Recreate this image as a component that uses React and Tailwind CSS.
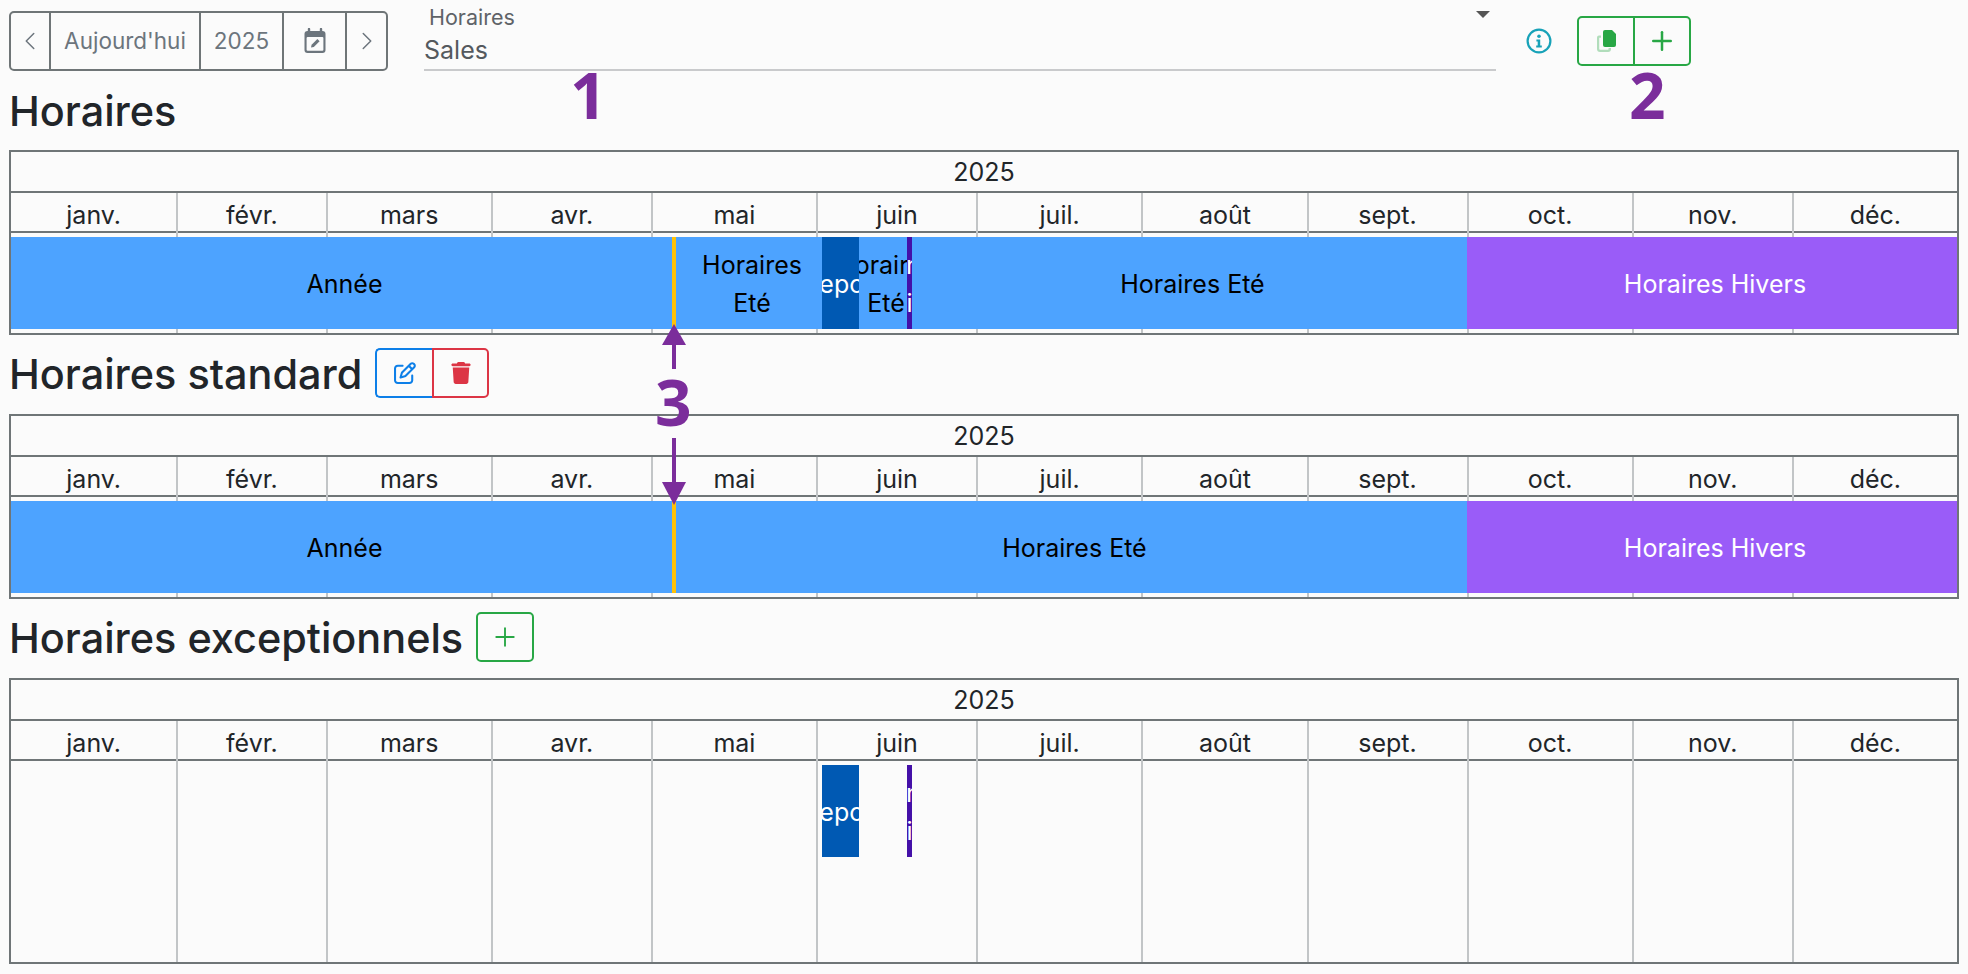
import React from 'react';
import { ChevronLeft, ChevronRight, Plus } from 'lucide-react';
import { FaTrash, FaRegPenToSquare } from 'react-icons/fa6';

const months = ['janv.', 'févr.', 'mars', 'avr.', 'mai', 'juin', 'juil.', 'août', 'sept.', 'oct.', 'nov.', 'déc.'];
const monthGrid = 'grid grid-cols-[31fr_28fr_31fr_30fr_31fr_30fr_31fr_31fr_30fr_31fr_30fr_31fr]';

const blue = 'bg-[#4da3ff] text-black';
const violet = 'bg-[#9a5cf8] text-white';
const navy = 'bg-[#0059b3] text-white';
const indigo = 'bg-[#4410a8] text-white';
const yellow = 'bg-[#ffc107]';

const summaryBars = [
  { w: 'w-[661px]', color: blue, lines: ['Année'] },
  { w: 'w-[4px]', color: yellow, lines: [] },
  { w: 'w-[146px]', color: blue, lines: ['Horaires', 'Eté'] },
  { w: 'w-[37px]', color: navy, lines: ['Repos'], tight: true },
  { w: 'w-[48px]', color: blue, lines: ['Horaires', 'Eté'] },
  { w: 'w-[5px]', color: indigo, lines: ['Lundi', 'Fin'], tight: true },
  { w: 'w-[555px]', color: blue, lines: ['Horaires Eté'] },
  { w: 'flex-1', color: violet, lines: ['Horaires Hivers'] },
];

const standardBars = [
  { w: 'w-[661px]', color: blue, lines: ['Année'] },
  { w: 'w-[4px]', color: yellow, lines: [] },
  { w: 'w-[791px]', color: blue, lines: ['Horaires Eté'] },
  { w: 'flex-1', color: violet, lines: ['Horaires Hivers'] },
];

const exceptionBars = [
  { w: 'w-[811px]', color: '', lines: [] },
  { w: 'w-[37px]', color: navy, lines: ['Repos'], tight: true },
  { w: 'w-[48px]', color: '', lines: [] },
  { w: 'w-[5px]', color: indigo, lines: ['Lundi', 'Fin'], tight: true },
];

function Bar({ w, color, lines, tight }) {
  return (
    <div className={`${w} ${color} flex h-full shrink-0 flex-col justify-center overflow-hidden pt-[2px]`}>
      {lines.map((line) => (
        // narrow bars cut the word on both sides, so it stays centred on the bar
        <div
          key={line}
          className={`relative w-max -translate-x-1/2 text-[25px] leading-[38px] ${tight ? 'left-1/2' : 'left-[calc(50%+3px)]'}`}
        >
          {line}
        </div>
      ))}
    </div>
  );
}

function Timeline({ bars, bodyClass }) {
  return (
    <div className="border-2 border-[#6f7577] text-[25px] text-[#212529]">
      <div className="flex h-[41px] items-center justify-center border-b-2 border-[#6f7577] pt-[2px]">2025</div>
      <div className={`${monthGrid} h-[40px] border-b-2 border-[#6f7577]`}>
        {months.map((m, i) => (
          <div key={m} className={`flex items-center justify-center pt-[4px] ${i > 0 ? 'border-l-2 border-[#c2c5c7]' : ''}`}>{m}</div>
        ))}
      </div>
      <div className={`grid ${bodyClass}`}>
        <div className={`${monthGrid} col-start-1 row-start-1`}>
          {months.map((m, i) => (
            <div key={m} className={i > 0 ? 'border-l-2 border-[#c2c5c7]' : ''} />
          ))}
        </div>
        <div className="col-start-1 row-start-1 mt-[4px] flex h-[92px]">
          {bars.map((b, i) => (
            <Bar key={i} {...b} />
          ))}
        </div>
      </div>
    </div>
  );
}

function CalendarEditIcon() {
  return (
    <svg width="24" height="26" viewBox="0 0 24 26" fill="none">
      <path d="M6 1v4M18 1v4" stroke="#6c757d" strokeWidth="2.4" strokeLinecap="round" />
      <rect x="1.5" y="3" width="21" height="22" rx="3" fill="#6c757d" />
      <rect x="3.6" y="9" width="16.8" height="13.8" rx="1" fill="#fbfbfb" />
      <path d="M8 19.6l.6-2.8 5.8-5.8 2.2 2.2-5.8 5.8z" fill="#6c757d" />
    </svg>
  );
}

function InfoIcon() {
  return (
    <svg width="26" height="26" viewBox="0 0 26 26" fill="none">
      <circle cx="13" cy="13" r="11.4" stroke="#17a2b8" strokeWidth="2.2" />
      <circle cx="13" cy="8.2" r="1.8" fill="#17a2b8" />
      <path d="M10.4 11.4h3.8v6.2h1.6v2h-5.6v-2h1.5v-4.2h-1.3z" fill="#17a2b8" />
    </svg>
  );
}

function CopyIcon() {
  return (
    <svg width="21" height="24" viewBox="0 0 21 24">
      <path d="M5 6.5H3a2 2 0 0 0-2 2V20a3 3 0 0 0 3 3h8a3 3 0 0 0 3-3v-1h-2.4v1a.8.8 0 0 1-.8.8H4a.8.8 0 0 1-.8-.8V8.7H5z" fill="#28a745" opacity="0.35" />
      <path d="M9 1h7l4 4v11a2 2 0 0 1-2 2H9a2 2 0 0 1-2-2V3a2 2 0 0 1 2-2z" fill="#28a745" />
    </svg>
  );
}

function UpDownArrow() {
  return (
    <svg className="absolute left-[660px] top-[323px]" width="28" height="186" viewBox="0 0 28 186" fill="#7b2d9b">
      <path d="M14 1L26 22H2z" />
      <rect x="12" y="20" width="4" height="26" />
      <rect x="12" y="115" width="4" height="50" />
      <path d="M14 182L2 159H26z" />
    </svg>
  );
}

function Callout({ className, children }) {
  return (
    <span className={`absolute font-['Noto_Sans',sans-serif] text-[64px] font-bold leading-none text-[#7b2d9b] ${className}`}>
      {children}
    </span>
  );
}

export default function App() {
  return (
    <div className="relative h-[974px] overflow-hidden bg-[#fbfbfb] px-[9px] font-['Inter',sans-serif] text-[#212529]">
      {/* Toolbar */}
      <div className="flex items-start pt-[11px]">
        <div className="flex h-[60px] w-[379px] items-stretch rounded-[5px] border-2 border-[#6f7577] text-[22.5px] text-[#6c757d]">
          <div className="flex w-[40px] items-center justify-center border-r-2 border-[#6f7577]">
            <ChevronLeft size={30} strokeWidth={1.2} />
          </div>
          <div className="flex w-[150px] items-center justify-center border-r-2 border-[#6f7577]">Aujourd'hui</div>
          <div className="flex w-[83px] items-center justify-center border-r-2 border-[#6f7577]">2025</div>
          <div className="flex w-[63px] items-center justify-center border-r-2 border-[#6f7577]">
            <CalendarEditIcon />
          </div>
          <div className="flex flex-1 items-center justify-center">
            <ChevronRight size={30} strokeWidth={1.2} />
          </div>
        </div>

        <div className="relative ml-[36px] mt-[-11px] h-[71px] w-[1072px] border-b-2 border-[#c9cacc]">
          <div className="pl-[5px] pt-[5px] text-[21.5px] leading-[24px] text-[#5f6368]">Horaires</div>
          <div className="mt-[7px] text-[25px] leading-[28px] text-[#54595e]">Sales</div>
          <div className="absolute right-[6px] top-[11px] h-0 w-0 border-x-[7px] border-t-[7px] border-x-transparent border-t-[#555]" />
        </div>

        <div className="ml-[30px] mt-[17px]">
          <InfoIcon />
        </div>

        <div className="ml-[25px] mt-[5px] flex h-[50px] w-[114px] rounded-[5px] border-2 border-[#28a745]">
          <div className="flex w-[56px] items-center justify-center border-r-2 border-[#28a745]">
            <CopyIcon />
          </div>
          <div className="flex flex-1 items-center justify-center text-[#28a745]">
            <Plus size={30} strokeWidth={2} />
          </div>
        </div>
      </div>

      {/* Horaires */}
      <h2 className="mb-[8px] mt-[10px] h-[61px] text-[41.4px] font-medium leading-[61px]">Horaires</h2>
      <Timeline bars={summaryBars} bodyClass="h-[100px]" />

      {/* Horaires standard */}
      <div className="mt-[13px] flex h-[66px] items-start gap-[13px]">
        <h2 className="text-[41.4px] font-medium leading-[52px]">Horaires standard</h2>
        <div className="flex h-[50px]">
          <div className="flex w-[57px] items-center justify-center rounded-l-[5px] border-2 border-r-0 border-[#0d7fe8] text-[#0d7fe8]">
            <FaRegPenToSquare size={22} />
          </div>
          <div className="flex w-[57px] items-center justify-center rounded-r-[5px] border-2 border-[#dc3545] text-[#dc3545]">
            <FaTrash size={22} />
          </div>
        </div>
      </div>
      <Timeline bars={standardBars} bodyClass="h-[100px]" />

      {/* Horaires exceptionnels */}
      <div className="mt-[13px] flex h-[66px] items-start gap-[13px]">
        <h2 className="text-[41.4px] font-medium leading-[52px]">Horaires exceptionnels</h2>
        <div className="flex h-[50px] w-[58px] items-center justify-center rounded-[5px] border-2 border-[#28a745] text-[#28a745]">
          <Plus size={30} strokeWidth={1.5} />
        </div>
      </div>
      <Timeline bars={exceptionBars} bodyClass="h-[201px]" />

      {/* Annotations */}
      <Callout className="left-[570px] top-[63px]">1</Callout>
      <Callout className="left-[1629px] top-[63px]">2</Callout>
      <Callout className="left-[655px] top-[370px]">3</Callout>
      <UpDownArrow />
    </div>
  );
}
